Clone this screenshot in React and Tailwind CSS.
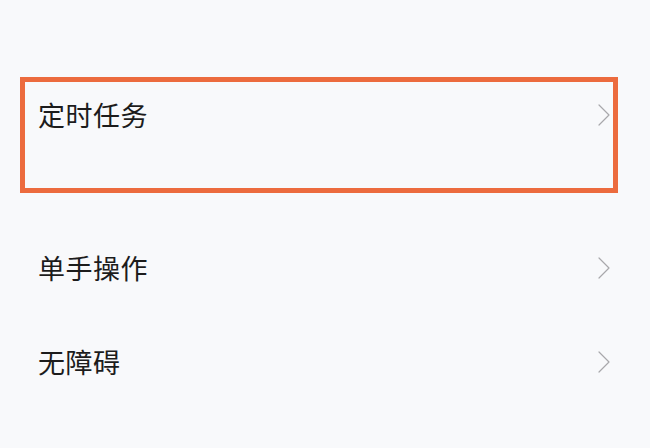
import React from 'react';

const Chevron = () => (
  <svg width="12" height="22" viewBox="0 0 12 22" fill="none" className="shrink-0">
    <polyline points="1,1 11,11 1,21" stroke="#a8a8ab" strokeWidth="1.2" strokeLinecap="round" strokeLinejoin="round" />
  </svg>
);

const Row = ({ label, className }) => (
  <div className={`flex items-center justify-between ${className}`}>
    <span className="text-[27px] tracking-[0.5px] leading-none text-[#1c1c1c] -translate-y-[1px]">{label}</span>
    <Chevron />
  </div>
);

export default function App() {
  return (
    <div
      className="w-[650px] h-[448px] bg-[#f8f9fb] overflow-hidden pt-[77px]"
      style={{ fontFamily: '"Noto Sans CJK SC", "Noto Sans", sans-serif' }}
    >
      {/* highlighted item */}
      <div className="ml-[20px] mr-[32px] h-[116px] border-[5px] border-[#ec6b3e]">
        <Row label="定时任务" className="h-[66px] pl-[13px] pr-[3px]" />
      </div>

      <div className="mt-[28px]">
        <Row label="单手操作" className="h-[94px] pl-[38px] pr-[40px]" />
        <Row label="无障碍" className="h-[94px] pl-[38px] pr-[40px]" />
      </div>
    </div>
  );
}
